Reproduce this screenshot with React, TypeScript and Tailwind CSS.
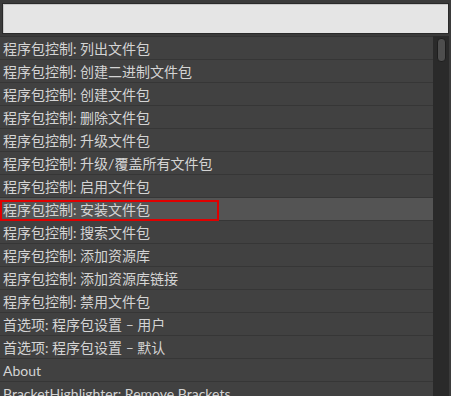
import React from "react";

const items = [
  "程序包控制: 列出文件包",
  "程序包控制: 创建二进制文件包",
  "程序包控制: 创建文件包",
  "程序包控制: 删除文件包",
  "程序包控制: 升级文件包",
  "程序包控制: 升级/覆盖所有文件包",
  "程序包控制: 启用文件包",
  "程序包控制: 安装文件包",
  "程序包控制: 搜索文件包",
  "程序包控制: 添加资源库",
  "程序包控制: 添加资源库链接",
  "程序包控制: 禁用文件包",
  "首选项: 程序包设置 – 用户",
  "首选项: 程序包设置 – 默认",
  "About",
  "BracketHighlighter: Remove Brackets",
];

export default function App() {
  return (
    <div
      className="w-[451px] h-[396px] overflow-hidden bg-[#3b3b3b] flex flex-col"
      style={{ fontFamily: 'Lato, "Noto Sans CJK SC", sans-serif' }}
    >
      <div className="h-[36px] shrink-0 px-[2px] pt-[3px]">
        <div className="h-[31px] bg-[#e5e5e5] border border-[#2a2a2a] shadow-[inset_1px_1px_0_#c8c8c8]" />
      </div>
      <div className="flex flex-1 min-h-0">
        <div className="w-[433px] flex flex-col border-t border-[#333]">
          {items.map((t, i) => (
            <div
              key={i}
              className={`relative h-[23px] shrink-0 border-b border-[#363636] flex items-center pl-[3px] pt-[1px] text-[14px] leading-none text-[#d4d4d4] ${
                i === 7 ? "bg-[#545454]" : "bg-[#414141]"
              }`}
            >
              <span className="whitespace-nowrap">{t}</span>
              {i === 7 && (
                <div className="absolute left-0 top-[2px] w-[219px] h-[21px] border-2 border-[#e00000]" />
              )}
            </div>
          ))}
        </div>
        <div className="w-[16px] bg-[#2a2a2a] flex justify-center pt-[2px]">
          <div className="w-[9px] h-[24px] rounded-[4px] bg-[#4e4e4e] border border-[#1e1e1e]" />
        </div>
        <div className="w-[2px] bg-[#3b3b3b]" />
      </div>
    </div>
  );
}
